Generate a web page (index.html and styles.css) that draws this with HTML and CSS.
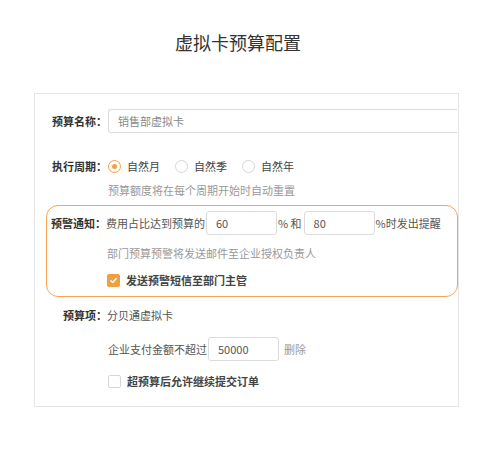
FILE: index.html
```html
<!DOCTYPE html>
<html lang="zh-CN">
<head>
    <meta charset="UTF-8">
    <meta name="viewport" content="width=device-width, initial-scale=1.0">
    <title>虚拟卡预算配置</title>
    <link rel="stylesheet" href="styles.css">
</head>
<body>
    <div id="page">
        <h1 class="title">虚拟卡预算配置</h1>

        <div class="card">
            <!-- 预算名称 -->
            <div class="group">
                <div class="line line-input">
                    <span class="label">预算名称：</span>
                    <input type="text" class="name-input" placeholder="销售部虚拟卡">
                </div>
            </div>

            <!-- 执行周期 -->
            <div class="group group-cycle">
                <div class="line">
                    <span class="label">执行周期：</span>
                    <label class="radio checked"><span class="dot"></span>自然月</label>
                    <label class="radio"><span class="dot"></span>自然季</label>
                    <label class="radio"><span class="dot"></span>自然年</label>
                </div>
                <div class="hint">预算额度将在每个周期开始时自动重置</div>
            </div>

            <!-- 预警通知 -->
            <div class="group warn">
                <div class="line line-input">
                    <span class="label">预警通知：</span>
                    <span class="text">费用占比达到预算的</span>
                    <input type="text" class="num-input" value="60">
                    <span class="text unit">% 和</span>
                    <input type="text" class="num-input" value="80">
                    <span class="text">%时发出提醒</span>
                </div>
                <div class="hint hint-warn">部门预算预警将发送邮件至企业授权负责人</div>
                <label class="check checked">
                    <span class="box">
                        <svg width="9" height="9" viewBox="0 0 10 10"><path d="M2 5.2 L4.2 7.2 L8 2.8" fill="none" stroke="#fff" stroke-width="1.6" stroke-linecap="round" stroke-linejoin="round"/></svg>
                    </span>
                    发送预警短信至部门主管
                </label>
            </div>

            <!-- 预算项 -->
            <div class="group group-items">
                <div class="line">
                    <span class="label">预算项：</span>
                    <span class="text">分贝通虚拟卡</span>
                </div>
                <div class="line line-input sub">
                    <span class="text">企业支付金额不超过</span>
                    <input type="text" class="num-input" value="50000">
                    <a class="remove">删除</a>
                </div>
                <label class="check check-last">
                    <span class="box"></span>
                    超预算后允许继续提交订单
                </label>
            </div>
        </div>
    </div>
</body>
</html>
```

FILE: styles.css
```css
body {
    font-family: "Noto Sans CJK SC", "Liberation Sans", sans-serif;
    margin: 0;
    background: #fff;
    color: #555;
    font-size: 11px;
}

#page {
    width: 425px;
    margin-left: 34px;
}

.title {
    margin: 0;
    padding: 29px 17px 0 0;
    height: 93px;
    box-sizing: border-box;
    text-align: center;
    font-size: 18px;
    font-weight: normal;
    line-height: 26px;
    color: #333;
}

.card {
    border: 1px solid #e4e4e4;
    padding: 15px 0 17px 11px;
}

.group {
    padding: 0 1px;
}

.line {
    display: flex;
    align-items: center;
    height: 20px;
}

.line-input {
    height: 24px;
}

.label {
    width: 60px;
    flex-shrink: 0;
    text-align: right;
    font-weight: bold;
    color: #333;
}

.warn .label {
    width: 59px;
}

input {
    font-family: inherit;
    font-size: 11px;
    height: 24px;
    box-sizing: border-box;
    border: 1px solid #dcdcdc;
    border-radius: 3px;
    padding: 0 9px;
    color: #555;
    outline: none;
}

.name-input {
    flex: 1;
    margin-left: 1px;
    border-right: none;
    border-radius: 3px 0 0 3px;
}

.name-input::placeholder {
    color: #888;
}

.num-input {
    width: 71px;
    margin: 0 1px;
}

.unit {
    margin-right: 1px;
}

.group-cycle {
    margin-top: 23px;
}

.radio {
    display: flex;
    align-items: center;
    color: #444;
    margin-right: 15px;
}

.radio:first-of-type {
    margin-left: 1px;
}

.dot {
    width: 13px;
    height: 13px;
    box-sizing: border-box;
    border: 1px solid #d6d6d6;
    border-radius: 50%;
    margin-right: 6px;
    position: relative;
}

.radio.checked .dot {
    border-color: #f5a047;
}

.radio.checked .dot::after {
    content: "";
    position: absolute;
    left: 3px;
    top: 3px;
    width: 5px;
    height: 5px;
    border-radius: 50%;
    background: #f5a047;
}

.hint {
    margin: 6px 0 0 61px;
    line-height: 16px;
    color: #999;
}

.warn {
    margin-top: 7px;
    border: 1px solid #f7a550;
    border-radius: 12px;
    padding: 5px 0 8px;
}

.hint-warn {
    margin: 10px 0 0 60px;
}

.check {
    display: flex;
    align-items: center;
    height: 16px;
    margin: 11px 0 0 60px;
    font-weight: bold;
    color: #444;
}

.box {
    width: 13px;
    height: 13px;
    box-sizing: border-box;
    border: 1px solid #d6d6d6;
    border-radius: 2px;
    margin-right: 6px;
    display: flex;
    align-items: center;
    justify-content: center;
}

.check.checked .box {
    background: #f0a040;
    border-color: #f0a040;
}

.group-items {
    margin-top: 8px;
}

.group-items .check {
    margin-left: 61px;
}

.sub {
    margin: 12px 0 0 61px;
}

.remove {
    color: #999;
    margin-left: 4px;
}

.check-last {
    margin-top: 12px;
}
```
